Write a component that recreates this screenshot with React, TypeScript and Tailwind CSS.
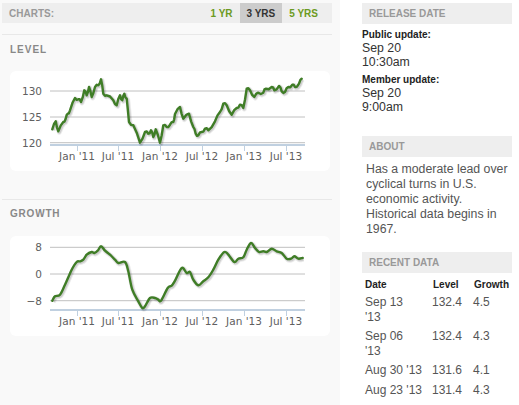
import React from "react";

type Pt = [number, number];

// traced from the screenshot, page coordinates
const LEVEL: Pt[] = [
  [52.3, 129.3], [55.7, 121.3], [58.3, 131.3], [63.3, 122], [65.7, 118.7], [67.7, 113.7], [70, 110.3],
  [75, 98], [78.3, 99.3], [81, 102], [84.3, 90.3], [86.7, 95.3], [89, 87], [91.7, 97], [95, 87],
  [98.3, 85.3], [101, 79.3], [103.3, 93.7], [106.7, 95.3], [113.3, 100.3], [116.7, 105.3], [120, 95.3],
  [122.3, 100.3], [124.3, 93.7], [126.7, 98.7], [129, 122], [133.3, 125.3], [140, 142.7], [145, 132],
  [148.3, 133.7], [151, 130.3], [153.3, 137], [155.7, 129.3], [160, 142.7], [163.3, 125.3], [166.7, 127],
  [170, 124.7], [173.3, 122], [175, 114], [180, 107], [183.3, 118.7], [189, 113.7], [193.3, 127],
  [195.7, 133.7], [198.3, 135.3], [201.7, 132], [205, 128.7], [208.3, 130.3], [215, 121.3], [220, 112],
  [223.3, 103.7], [226.7, 105.3], [231.7, 114.7], [236.7, 108], [240, 104.7], [243.3, 108], [246.7, 88.7],
  [250, 90.3], [254.3, 97], [258.3, 92.7], [263.3, 92.7], [265.7, 88.7], [271.7, 87], [274.3, 90.3],
  [279, 86], [281.7, 91.3], [285, 92], [288.3, 87], [292.3, 84.7], [295, 87], [299, 83.7], [301.7, 78.7],
];

const GROWTH: Pt[] = [
  [52.3, 300.7], [55, 296.3], [60, 294.7], [65, 284.7], [71.7, 269.7], [76.7, 262], [80, 261.3],
  [83.3, 259.7], [86.7, 254.7], [91.7, 252], [94.3, 253], [97.7, 250.7], [101, 246.3], [105, 250.7],
  [110, 254.7], [115, 259.7], [118.3, 263], [125, 262], [128.3, 271.3], [132.3, 289.7], [138.3, 301.3],
  [142.3, 308], [145, 306.3], [150, 298], [155, 298], [158.3, 299.7], [161, 300.7], [167.7, 288],
  [171.7, 285.7], [175, 280.7], [181.7, 268], [186.7, 273], [190, 272], [193.3, 279.7], [198.3, 285.3],
  [203.3, 281.3], [208.3, 277.3], [213.3, 269.7], [218.3, 259.7], [224.3, 252], [228.3, 254.7],
  [234.3, 262], [238.3, 258.7], [243.3, 257.3], [246.7, 249.7], [251, 243], [255, 248], [259, 252],
  [263.3, 251.3], [266.7, 252], [271.7, 248.7], [276.7, 251.3], [281.7, 253], [286.7, 258.7],
  [291, 258.7], [294.3, 256.3], [298.3, 258.7], [302.7, 258],
];

const TICKS = [67, 108, 150, 192, 234, 276];
const MONTHS = ["Jan '11", "Jul '11", "Jan '12", "Jul '12", "Jan '13", "Jul '13"];

function jagged(p: Pt[]): string {
  const out: Pt[] = [];
  p.forEach((pt, i) => {
    out.push(pt);
    const n = p[i + 1];
    if (n) out.push([(pt[0] + n[0]) / 2, (pt[1] + n[1]) / 2 + (i % 2 ? 1.3 : -1.3)]);
  });
  return "M" + out.map(([x, y]) => `${x.toFixed(1)},${y.toFixed(1)}`).join(" L");
}

function smooth(p: Pt[]): string {
  let d = `M${p[0][0]},${p[0][1]}`;
  for (let i = 0; i < p.length - 1; i++) {
    const p0 = p[i - 1] || p[i], p1 = p[i], p2 = p[i + 1], p3 = p[i + 2] || p2;
    const c1x = p1[0] + (p2[0] - p0[0]) / 6, c1y = p1[1] + (p2[1] - p0[1]) / 6;
    const c2x = p2[0] - (p3[0] - p1[0]) / 6, c2y = p2[1] - (p3[1] - p1[1]) / 6;
    d += ` C${c1x.toFixed(1)},${c1y.toFixed(1)} ${c2x.toFixed(1)},${c2y.toFixed(1)} ${p2[0]},${p2[1]}`;
  }
  return d;
}

function Chart({ d, grid }: { d: string; grid: { y: number; label: string }[] }) {
  return (
    <div className="ml-[8px] w-[320px] h-[100px] rounded-[6px] bg-white">
      <svg width="320" height="100" viewBox="0 0 320 100" className="block" style={{ fontFamily: "'DejaVu Sans', sans-serif" }}>
        {grid.map((g) => (
          <g key={g.label}>
            <line x1="40" x2="295" y1={g.y} y2={g.y} stroke="#c0c0c0" strokeWidth="1" />
            <text x="32" y={g.y + 4} textAnchor="end" fontSize="10.5" fill="#606060">{g.label}</text>
          </g>
        ))}
        <line x1="40" x2="295" y1="74" y2="74" stroke="#c0d0e0" strokeWidth="2" />
        {TICKS.map((x, i) => (
          <g key={x}>
            <line x1={x + 0.5} x2={x + 0.5} y1="75" y2="80" stroke="#c0d0e0" strokeWidth="1" />
            <text x={x} y="89" textAnchor="middle" fontSize="10.5" fill="#606060">{MONTHS[i]}</text>
          </g>
        ))}
        <path d={d} fill="none" stroke="rgba(0,0,0,0.08)" strokeWidth="5" strokeLinejoin="round" transform="translate(1,1)" />
        <path d={d} fill="none" stroke="rgba(0,0,0,0.12)" strokeWidth="3" strokeLinejoin="round" transform="translate(1,1)" />
        <path d={d} fill="none" stroke="#3f7d26" strokeWidth="2.4" strokeLinejoin="round" strokeLinecap="round" />
      </svg>
    </div>
  );
}

function SideHeader({ children }: { children: React.ReactNode }) {
  return (
    <div className="h-[21px] bg-[#eeeeee] pl-[7px] flex items-center text-[10px] font-bold text-[#999999]">
      {children}
    </div>
  );
}

const rows = [
  { date: ["Sep 13", "'13"], level: "132.4", growth: "4.5" },
  { date: ["Sep 06", "'13"], level: "132.4", growth: "4.3" },
  { date: ["Aug 30 '13"], level: "131.6", growth: "4.1" },
  { date: ["Aug 23 '13"], level: "131.4", growth: "4.3" },
];

export default function App() {
  const levelD = jagged(LEVEL.map(([x, y]) => [x - 10, y - 71] as Pt));
  const growthD = smooth(GROWTH.map(([x, y]) => [x - 10, y - 236] as Pt));

  return (
    <div className="flex w-[519px] h-[405px] overflow-hidden bg-white" style={{ fontFamily: "'Liberation Sans', Arial, sans-serif" }}>
      {/* charts */}
      <div className="w-[340px] shrink-0 bg-[#f9f9f9] pt-[3px] pl-[2px] pr-[8px]">
        <div className="h-[20px] bg-[#eeeeee] flex items-center justify-between pr-[7px] text-[10px] font-bold">
          <span className="pl-[7px] text-[#999999]">CHARTS:</span>
          <div className="flex h-full">
            <span className="px-[7px] flex items-center text-[#6b9a22]">1 YR</span>
            <span className="px-[7px] flex items-center bg-[#cccccc] text-[#333333]">3 YRS</span>
            <span className="px-[7px] flex items-center text-[#6b9a22]">5 YRS</span>
          </div>
        </div>
        <div className="mt-[11px] h-px bg-[#e8e8e8]" />
        <div className="mt-[9px] pl-[8px] leading-[12px] text-[10px] font-bold tracking-[1px] text-[#888888]">LEVEL</div>
        <div className="mt-[15px]">
          <Chart d={levelD} grid={[{ y: 20, label: "130" }, { y: 46, label: "125" }, { y: 71.7, label: "120" }]} />
        </div>
        <div className="mt-[28px] h-px bg-[#e8e8e8]" />
        <div className="mt-[8px] pl-[8px] leading-[12px] text-[10px] font-bold tracking-[0.8px] text-[#888888]">GROWTH</div>
        <div className="mt-[16px]">
          <Chart d={growthD} grid={[{ y: 11.3, label: "8" }, { y: 38, label: "0" }, { y: 64.7, label: "−8" }]} />
        </div>
      </div>

      {/* sidebar */}
      <div className="w-[150px] ml-[22px] pt-[3px]">
        <SideHeader>RELEASE DATE</SideHeader>
        <div className="mt-[4px] text-[#333333]">
          <div className="leading-[13px] text-[10px] font-bold text-[#222222]">Public update:</div>
          <div className="leading-[14px] text-[12.3px]">Sep 20<br />10:30am</div>
          <div className="mt-[4px] leading-[13px] text-[10px] font-bold text-[#222222]">Member update:</div>
          <div className="leading-[14px] text-[12.3px]">Sep 20<br />9:00am</div>
        </div>
        <div className="mt-[21.5px]">
          <SideHeader>ABOUT</SideHeader>
        </div>
        <p className="mt-[5px] pl-[4px] pr-[2px] text-[12.3px] leading-[15px] text-[#555555]">
          Has a moderate lead over cyclical turns in U.S. economic activity. Historical data begins in 1967.
        </p>
        <div className="mt-[15px]">
          <SideHeader>RECENT DATA</SideHeader>
        </div>
        <table className="mt-[5px] w-[150px] border-collapse table-fixed">
          <colgroup>
            <col className="w-[68px]" />
            <col className="w-[41px]" />
            <col />
          </colgroup>
          <thead>
            <tr className="text-[10px] font-bold text-[#222222] leading-[10px]">
              <th className="text-left font-bold pl-[3px] py-[2.5px]">Date</th>
              <th className="text-left font-bold pl-[3px] py-[2.5px]">Level</th>
              <th className="text-left font-bold pl-[3px] py-[2.5px]">Growth</th>
            </tr>
          </thead>
          <tbody className="text-[12px] leading-[14.5px] text-[#555555]">
            {rows.map((r) => (
              <tr key={r.date.join(" ")} className="align-top">
                <td className="pl-[3px] py-[2.5px] whitespace-nowrap">
                  {r.date.map((l, i) => (
                    <div key={i}>{l}</div>
                  ))}
                </td>
                <td className="pl-[2px] py-[2.5px]">{r.level}</td>
                <td className="pl-[2px] py-[2.5px]">{r.growth}</td>
              </tr>
            ))}
          </tbody>
        </table>
      </div>
    </div>
  );
}
